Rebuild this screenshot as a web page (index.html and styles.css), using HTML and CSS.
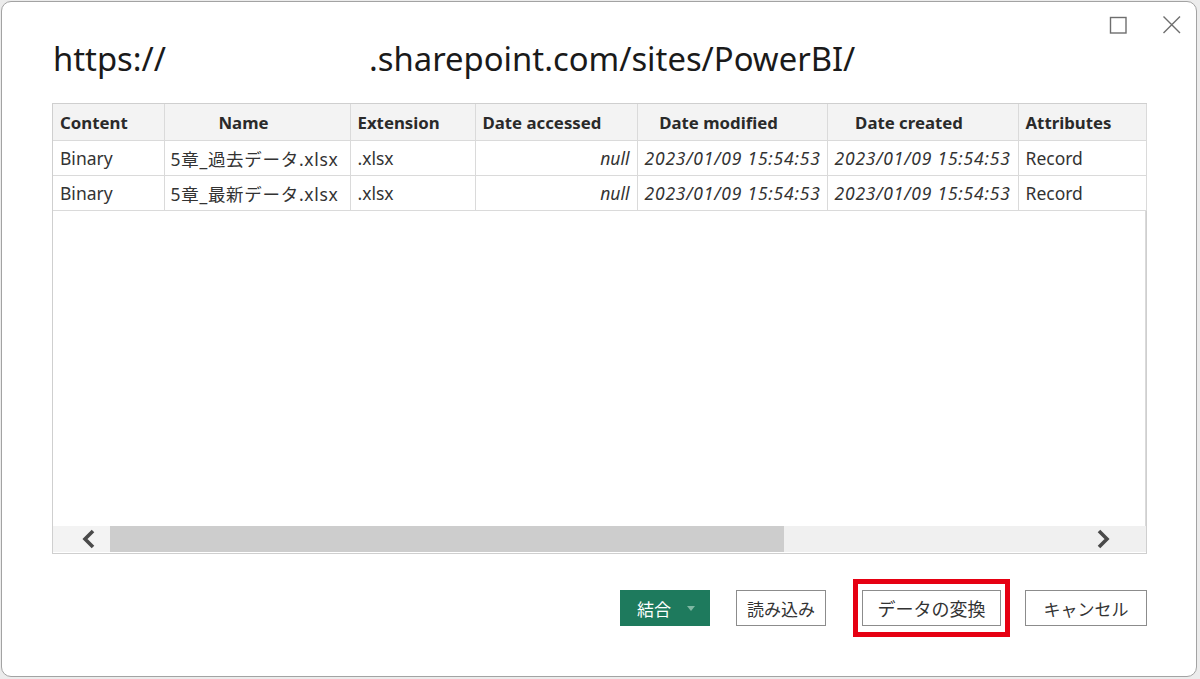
FILE: index.html
```html
<!DOCTYPE html>
<html lang="ja">
<head>
<meta charset="utf-8">
<link rel="stylesheet" href="styles.css">
</head>
<body>
<div class="dialog">
  <div class="titlebar">
    <svg class="tb-icon" width="20" height="20" viewBox="0 0 20 20"><rect x="2.5" y="2.5" width="15.5" height="15.5" fill="none" stroke="#6e6e6e" stroke-width="1.4"/></svg>
    <svg class="tb-icon" width="22" height="20" viewBox="0 0 22 20"><path d="M2.5 1.5 L19 18 M19 1.5 L2.5 18" stroke="#6e6e6e" stroke-width="1.4" fill="none"/></svg>
  </div>
  <h1 class="title"><span>https://</span><span class="title-rest">.sharepoint.com/sites/PowerBI/</span></h1>
  <div class="grid-box">
    <table class="grid">
      <colgroup>
        <col style="width:111px"><col style="width:186px"><col style="width:125px"><col style="width:162px"><col style="width:190px"><col style="width:191px"><col style="width:128px">
      </colgroup>
      <thead>
        <tr>
          <th>Content</th>
          <th class="c">Name</th>
          <th>Extension</th>
          <th>Date accessed</th>
          <th class="c">Date modified</th>
          <th class="c">Date created</th>
          <th>Attributes</th>
        </tr>
      </thead>
      <tbody>
        <tr>
          <td>Binary</td>
          <td class="jp">5章_過去データ.xlsx</td>
          <td>.xlsx</td>
          <td class="r i">null</td>
          <td class="i d">2023/01/09 15:54:53</td>
          <td class="i d">2023/01/09 15:54:53</td>
          <td>Record</td>
        </tr>
        <tr>
          <td>Binary</td>
          <td class="jp">5章_最新データ.xlsx</td>
          <td>.xlsx</td>
          <td class="r i">null</td>
          <td class="i d">2023/01/09 15:54:53</td>
          <td class="i d">2023/01/09 15:54:53</td>
          <td>Record</td>
        </tr>
      </tbody>
    </table>
    <div class="grid-fill"></div>
    <div class="hscroll">
      <div class="arrow-btn left"><svg width="18" height="22" viewBox="0 0 18 22"><path d="M14 3 L6 11 L14 19" stroke="#4a4a4a" stroke-width="3.6" fill="none"/></svg></div>
      <div class="thumb"></div>
      <div class="track"></div>
      <div class="arrow-btn right"><svg width="18" height="22" viewBox="0 0 18 22"><path d="M4 3 L12 11 L4 19" stroke="#4a4a4a" stroke-width="3.6" fill="none"/></svg></div>
    </div>
  </div>
  <div class="actions">
    <button class="btn primary">結合<span class="caret"></span></button>
    <button class="btn load">読み込み</button>
    <button class="btn transform highlighted">データの変換</button>
    <button class="btn cancel">キャンセル</button>
  </div>
</div>
</body>
</html>
```
FILE: styles.css
```css
html, body {
  margin: 0;
  padding: 0;
}
body {
  width: 1200px;
  height: 679px;
  background: #ececec;
  padding: 1px 3px 2px 1px;
  box-sizing: border-box;
  font-family: "Noto Sans", "Noto Sans CJK JP", sans-serif;
  overflow: hidden;
}
.dialog {
  width: 1196px;
  height: 676px;
  box-sizing: border-box;
  background: #ffffff;
  border: 1px solid #a3a3a3;
  border-radius: 10px;
  padding: 0 0 0 50px;
  display: flex;
  flex-direction: column;
}
.titlebar {
  height: 37px;
  display: flex;
  justify-content: flex-end;
  align-items: flex-end;
  gap: 33px;
  padding-right: 13px;
}
.tb-icon {
  display: block;
  margin-bottom: 4px;
}
.title {
  margin: 0 0 0 1px;
  height: 64px;
  font-weight: 400;
  font-size: 32.8px;
  line-height: 40px;
  color: #1a1a1a;
  white-space: nowrap;
}
.title-rest {
  margin-left: 203px;
}
.grid-box {
  width: 1095px;
  height: 451px;
  box-sizing: border-box;
  border: 1px solid #cfcfcf;
  display: flex;
  flex-direction: column;
}
.grid {
  border-collapse: collapse;
  table-layout: fixed;
  width: 1093px;
  font-size: 17.5px;
  color: #333;
}
.grid th, .grid td {
  border: 1px solid #dadada;
  padding: 0 7px;
  text-align: left;
  white-space: nowrap;
  overflow: hidden;
}
.grid tr:first-child th { border-top: none; }
.grid th:first-child, .grid td:first-child { border-left: none; }
.grid th {
  height: 36px;
  background: #f3f3f3;
  font-size: 16.8px;
  font-weight: 700;
  color: #2a2a2a;
}
.grid td {
  height: 34px;
}
.grid th.c { text-align: center; padding-right: 34px; }
.grid .r { text-align: right; }
.grid .i { font-style: italic; }
.grid td.d { padding: 0 5px 0 7px; letter-spacing: 0.8px; }
.grid td.jp { letter-spacing: 0.7px; padding: 0 6px; }
.grid-fill {
  flex: 1;
  margin-left: 1092px;
  border-left: 1px solid #dadada;
}
.hscroll {
  height: 26px;
  margin-bottom: 1px;
  display: flex;
  background: #f0f0f0;
}
.arrow-btn {
  display: flex;
  align-items: center;
  justify-content: center;
}
.arrow-btn.left {
  width: 57px;
  background: #f3f3f3;
  justify-content: flex-start;
  padding-left: 26px;
  box-sizing: border-box;
}
.arrow-btn.right {
  width: 60px;
  justify-content: flex-start;
  padding-left: 9px;
  box-sizing: border-box;
}
.thumb {
  width: 674px;
  background: #cdcdcd;
}
.track { flex: 1; }
.actions {
  margin-top: 36px;
  width: 1095px;
  display: flex;
  justify-content: flex-end;
  align-items: center;
}
.btn {
  height: 36px;
  box-sizing: border-box;
  font-family: "Noto Sans CJK JP", sans-serif;
  font-size: 17px;
  color: #333;
  background: #fff;
  border: 1.5px solid #8c8c8c;
  padding: 0;
  position: relative;
}
.btn.primary {
  width: 90px;
  background: #1e7a5d;
  border-color: #1e7a5d;
  color: #fff;
  display: flex;
  align-items: center;
  justify-content: flex-start;
  padding-left: 16px;
}
.caret {
  margin-left: 16px;
  width: 0;
  height: 0;
  border-left: 4px solid transparent;
  border-right: 4px solid transparent;
  border-top: 5px solid #7fb7a3;
}
.btn.load { width: 90px; margin-left: 26px; }
.btn.transform { width: 139px; margin-left: 36px; font-size: 18px; }
.btn.cancel { width: 122px; margin-left: 24px; }
.highlighted::after {
  content: "";
  position: absolute;
  left: -10px;
  right: -10px;
  top: -12px;
  bottom: -12px;
  border: 5px solid #e60012;
}
```
